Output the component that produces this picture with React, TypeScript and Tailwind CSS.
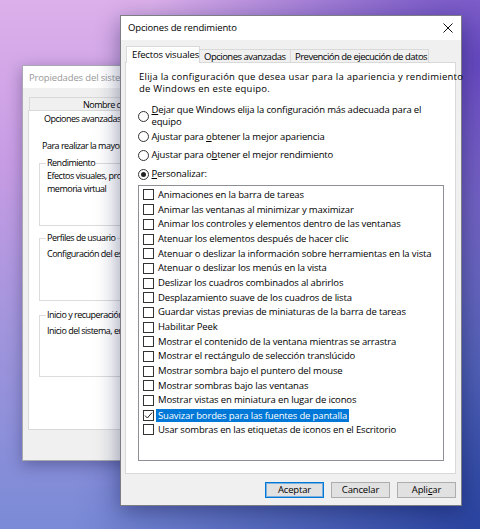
import React from 'react';

const EFFECTS = [
  { label: 'Animaciones en la barra de tareas', checked: false },
  { label: 'Animar las ventanas al minimizar y maximizar', checked: false },
  { label: 'Animar los controles y elementos dentro de las ventanas', checked: false },
  { label: 'Atenuar los elementos después de hacer clic', checked: false },
  { label: 'Atenuar o deslizar la información sobre herramientas en la vista', checked: false },
  { label: 'Atenuar o deslizar los menús en la vista', checked: false },
  { label: 'Deslizar los cuadros combinados al abrirlos', checked: false },
  { label: 'Desplazamiento suave de los cuadros de lista', checked: false },
  { label: 'Guardar vistas previas de miniaturas de la barra de tareas', checked: false },
  { label: 'Habilitar Peek', checked: false },
  { label: 'Mostrar el contenido de la ventana mientras se arrastra', checked: false },
  { label: 'Mostrar el rectángulo de selección translúcido', checked: false },
  { label: 'Mostrar sombra bajo el puntero del mouse', checked: false },
  { label: 'Mostrar sombras bajo las ventanas', checked: false },
  { label: 'Mostrar vistas en miniatura en lugar de iconos', checked: false },
  { label: 'Suavizar bordes para las fuentes de pantalla', checked: true, selected: true },
  { label: 'Usar sombras en las etiquetas de iconos en el Escritorio', checked: false },
];

function Radio({ on }: { on?: boolean }) {
  return (
    <span className="w-[11px] h-[11px] rounded-full border border-[#333] bg-white flex items-center justify-center shrink-0">
      {on && <span className="w-[5px] h-[5px] rounded-full bg-[#222]" />}
    </span>
  );
}

function CheckBox({ checked }: { checked: boolean }) {
  return (
    <span className="w-[11px] h-[11px] border border-[#333] bg-white flex items-center justify-center shrink-0">
      {checked && (
        <svg width="9" height="9" viewBox="0 0 9 9">
          <path d="M1 4.6 L3.4 7 L8 1.6" fill="none" stroke="#222" strokeWidth="1" />
        </svg>
      )}
    </span>
  );
}

function GroupBox({ title, lines, className }: { title: string; lines: string[]; className: string }) {
  return (
    <fieldset className={`border border-[#dcdcdc] px-[7px] ${className}`}>
      <legend className="px-[1px] -ml-[1px] leading-[12px]">{title}</legend>
      {lines.map((l) => (
        <p key={l} className="leading-[13px]">{l}</p>
      ))}
    </fieldset>
  );
}

export default function App() {
  return (
    <div className="relative w-[480px] h-[529px] overflow-hidden font-['Open_Sans',sans-serif] text-black bg-[radial-gradient(ellipse_at_100%_100%,#2a44a0_0%,rgba(42,68,160,0)_60%),radial-gradient(ellipse_70%_60%_at_100%_12%,#6548c0_0%,rgba(101,72,192,0)_100%),linear-gradient(180deg,#dcb0ea_0%,#c89ce4_30%,#9e94dc_65%,#7a8ad6_100%)]">
      {/* Propiedades del sistema (inactive, behind) */}
      <div className="absolute left-[22px] top-[65px] w-[320px] h-[396px] border border-[#a8a8b0] bg-[#f0f0f0] shadow-[0_4px_14px_rgba(20,20,60,0.35)] text-[9px] tracking-[-0.5px] overflow-hidden">
        <div className="h-[22px] bg-white pl-[6px] leading-[24px] text-[#999] text-[9.5px] tracking-[-0.15px] whitespace-nowrap">
          Propiedades del sistema
        </div>
        <div className="px-[5px] pt-[9px] whitespace-nowrap">
          <div className="flex ml-[1px]">
            <div className="w-[176px] h-[13px] border-t border-l border-[#d9d9d9] pl-[53px] leading-[13px]">Nombre de equipo</div>
            <div className="w-[80px] h-[13px] border-t border-x border-[#d9d9d9] pl-[20px] leading-[13px]">Hardware</div>
          </div>
          <div className="flex">
            <div className="w-[100px] h-[16px] -mb-px relative bg-white border-t border-l border-[#d9d9d9] pl-[15px] leading-[15px]">Opciones avanzadas</div>
            <div className="w-[110px] h-[15px] border-t border-x border-[#d9d9d9] pl-[10px] leading-[15px]">Protección del sistema</div>
          </div>
          <div className="h-[305px] bg-white border border-[#d9d9d9] pl-[10px] pt-[13px]">
            <p className="ml-[3px] leading-[13px]">Para realizar la mayoría de estos cambios, debe iniciar sesión como administrador.</p>
            <GroupBox
              className="h-[69px] mt-[5px]"
              title="Rendimiento"
              lines={['Efectos visuales, programación del procesador, uso de memoria y', 'memoria virtual']}
            />
            <GroupBox
              className="h-[69px] mt-[6px] pt-[3px]"
              title="Perfiles de usuario"
              lines={['Configuración del escritorio relacionada con el inicio de sesión']}
            />
            <GroupBox
              className="h-[68px] mt-[8px] pt-[3px]"
              title="Inicio y recuperación"
              lines={['Inicio del sistema, error del sistema e información de depuración']}
            />
          </div>
        </div>
      </div>

      {/* Opciones de rendimiento (active dialog) */}
      <div className="absolute left-[120px] top-[15px] w-[342px] h-[491px] border border-[#7d7d86] bg-[#f0f0f0] shadow-[0_6px_22px_rgba(10,20,70,0.45)] text-[9.5px] tracking-[-0.15px] whitespace-nowrap">
        <div className="h-[24px] bg-white flex items-center justify-between pl-[7px] pr-[7px]">
          <span className="pt-[1px]">Opciones de rendimiento</span>
          <svg width="10" height="10" viewBox="0 0 10 10" className="mr-[1px]">
            <path d="M0.5 0.5 L9.5 9.5 M9.5 0.5 L0.5 9.5" stroke="#111" strokeWidth="1" />
          </svg>
        </div>

        <div className="pl-[4px] pr-[5px] pt-[6px]">
          <div className="flex items-end h-[16px] tracking-[-0.5px]">
            <div className="relative z-10 ml-[1px] w-[74px] h-[17px] -mb-px bg-white border-t border-x border-[#d9d9d9] pl-[5px] leading-[16px] tracking-[-0.15px]">
              Efectos visuales
            </div>
            <div className="w-[91px] h-[13px] border-t border-r border-[#d9d9d9] pl-[4px] leading-[13px] overflow-hidden">Opciones avanzadas</div>
            <div className="w-[138px] h-[13px] border-t border-r border-[#d9d9d9] pl-[4px] leading-[13px] overflow-hidden">
              Prevención de ejecución de datos
            </div>
          </div>

          <div className="h-[412px] bg-white border border-[#d9d9d9] pl-[12px] pt-[8px]">
            <p className="ml-[1px] leading-[12px] tracking-[0.25px]">
              Elija la configuración que desea usar para la apariencia y rendimiento
              <br />
              de Windows en este equipo.
            </p>

            <div className="flex items-center gap-[2.5px] mt-[8.75px]">
              <Radio />
              <span className="leading-[12.5px]">
                <span className="underline">D</span>ejar que Windows elija la configuración más adecuada para el
                <br />
                equipo
              </span>
            </div>
            <div className="flex items-center gap-[2.5px] mt-[1.75px] h-[12.5px]">
              <Radio />
              <span>
                Ajustar para <span className="underline">o</span>btener la mejor apariencia
              </span>
            </div>
            <div className="flex items-center gap-[2.5px] mt-[6px] h-[12.5px]">
              <Radio />
              <span>
                Ajustar para o<span className="underline">b</span>tener el mejor rendimiento
              </span>
            </div>
            <div className="flex items-center gap-[2.5px] mt-[6.5px] h-[12.5px]">
              <Radio on />
              <span>
                <span className="underline">P</span>ersonalizar:
              </span>
            </div>

            <div className="mt-[4.5px] w-[306px] h-[276px] border border-[#8e8f94] bg-white pt-[1.6px] pl-[4px]">
              {EFFECTS.map((e) => (
                <div key={e.label} className="flex items-center h-[14.7px]">
                  <CheckBox checked={e.checked} />
                  {e.selected ? (
                    <span className="ml-[2px] px-[2px] h-[13px] leading-[13px] bg-[#0078d7] text-white">{e.label}</span>
                  ) : (
                    <span className="ml-[4px]">{e.label}</span>
                  )}
                </div>
              ))}
            </div>
          </div>

          <div className="flex justify-end gap-[7px] mt-[8px]">
            <button className="w-[59px] h-[16px] bg-[#e1e1e1] border border-[#0078d7] shadow-[inset_0_0_0_1px_rgba(0,120,215,0.45)] leading-[14px]">
              Aceptar
            </button>
            <button className="w-[59px] h-[16px] bg-[#e1e1e1] border border-[#adadad] leading-[14px]">Cancelar</button>
            <button className="w-[59px] h-[16px] bg-[#e1e1e1] border border-[#adadad] leading-[14px]">
              Apli<span className="underline">c</span>ar
            </button>
          </div>
        </div>
      </div>
    </div>
  );
}
